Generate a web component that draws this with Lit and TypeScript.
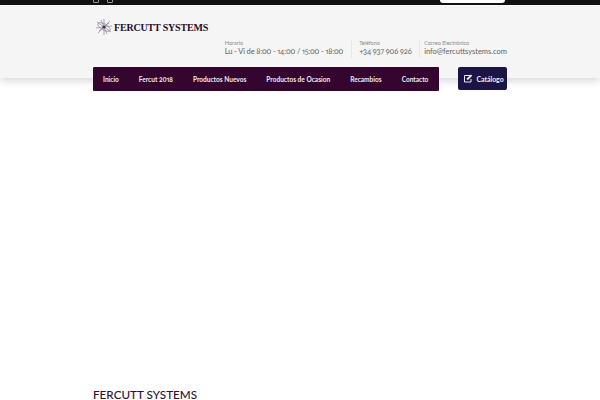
import { LitElement, html, css } from "lit";
import { customElement } from "lit/decorators.js";

@customElement("app-root")
export class AppRoot extends LitElement {
  static styles = css`
    :host { display: block; width: 600px; height: 400px; overflow: hidden; background: #fff; font-family: Lato, "Open Sans", sans-serif; font-variant-numeric: oldstyle-nums proportional-nums; }
    .top { height: 5px; background: #121212; overflow: hidden; }
    .wrap { width: 414px; margin-left: 93px; }
    .top .wrap { display: flex; justify-content: space-between; height: 5px; }
    .ticons { display: flex; gap: 8px; align-items: flex-end; margin-top: -3px; height: 6px; }
    .ticons span { width: 6px; height: 6px; border: 1px solid #999; box-sizing: border-box; border-radius: 1px; }
    .search { width: 65px; height: 3px; background: #fff; border-radius: 0 0 3px 3px; margin-right: 2px; }
    .head { height: 73px; background: #f5f5f5; box-shadow: 0 3px 8px rgba(0,0,0,.16); border-top: 1px solid #fdfdfd; box-sizing: border-box; }
    .logo { display: flex; align-items: center; gap: 1px; padding: 9px 0 0 2px; height: 24px; box-sizing: content-box; }
    .logo svg { opacity: .85; }
    .logo span { font: bold 10px "Liberation Serif", serif; color: #2a0a2c; letter-spacing: -0.18px; white-space: nowrap; }
    .info { display: flex; justify-content: flex-end; padding-top: 1px; }
    .cell { padding: 0 7.5px; border-right: 1px solid #e6e6e6; height: 18px; }
    .cell:last-child { border-right: 0; padding: 0 0 0 4px; }
    .cell small { display: block; font-size: 5.5px; line-height: 7px; color: #8a8a8a; }
    .cell b { display: block; font-weight: 400; font-size: 7.5px; line-height: 10px; color: #626262; white-space: nowrap; }
    .cell b.time { letter-spacing: -0.15px; }
    .cell b.phone { letter-spacing: -0.12px; }
    .navrow { display: flex; justify-content: space-between; margin-top: -11px; }
    nav { width: 346px; height: 24px; box-sizing: border-box; background: #33052f; border-radius: 1px; display: flex; align-items: center; padding: 0 10px; gap: 20px; box-shadow: 0 0 2px rgba(255,255,255,.5); }
    nav a, .cat { color: #f1e9f0; font-size: 6.55px; font-weight: 700; white-space: nowrap; }
    .cat { width: 49px; height: 23px; box-sizing: border-box; padding-left: 2px; background: #1b1445; border-radius: 2px; display: flex; align-items: center; justify-content: center; gap: 3px; font-size: 6.9px; }
    .foot { margin: 298px 0 0 93px; font-size: 11.7px; line-height: 11px; color: #2c0f33; white-space: nowrap; font-weight: 500; }
  `;

  render() {
    return html`
      <div class="top"><div class="wrap">
        <div class="ticons"><span></span><span></span></div>
        <div class="search"></div>
      </div></div>
      <div class="head"><div class="wrap">
        <div class="logo">
          <svg width="18" height="18" viewBox="0 0 18 18" fill="none" stroke="#77728a" stroke-width=".7">
            <path d="M9 1V17M2 4 16 14M1 10 17 8M3 15 15 3M6 2 12 16M14 5 4 13"/>
            <ellipse cx="9" cy="9" rx="7" ry="3" transform="rotate(30 9 9)"/>
            <circle cx="9" cy="9" r="1.6" fill="#33052f" stroke="none"/>
          </svg>
          <span>FERCUTT SYSTEMS</span>
        </div>
        <div class="info">
          <div class="cell"><small>Horario</small><b class="time">Lu - Vi de 8:00 - 14:00 / 15:00 - 18:00</b></div>
          <div class="cell"><small>Teléfono</small><b class="phone">+34 937 906 926</b></div>
          <div class="cell"><small>Correo Electrónico</small><b>info@fercuttsystems.com</b></div>
        </div>
      </div></div>
      <div class="wrap navrow">
        <nav>
          <a>Inicio</a><a>Fercut 2018</a><a>Productos Nuevos</a><a>Productos de Ocasion</a><a>Recambios</a><a>Contacto</a>
        </nav>
        <div class="cat">
          <svg width="10" height="9" viewBox="0 0 10 9" fill="none" stroke="#f1e9f0" stroke-width="1">
            <path d="M7 1.5H1.5V8H8V5"/><path d="M3.8 5.8 4 4.2 8 .6 9.2 1.8 5.3 5.7Z" fill="#f1e9f0" stroke="none"/>
          </svg>
          Catálogo
        </div>
      </div>
      <div class="foot">FERCUTT SYSTEMS</div>
    `;
  }
}
